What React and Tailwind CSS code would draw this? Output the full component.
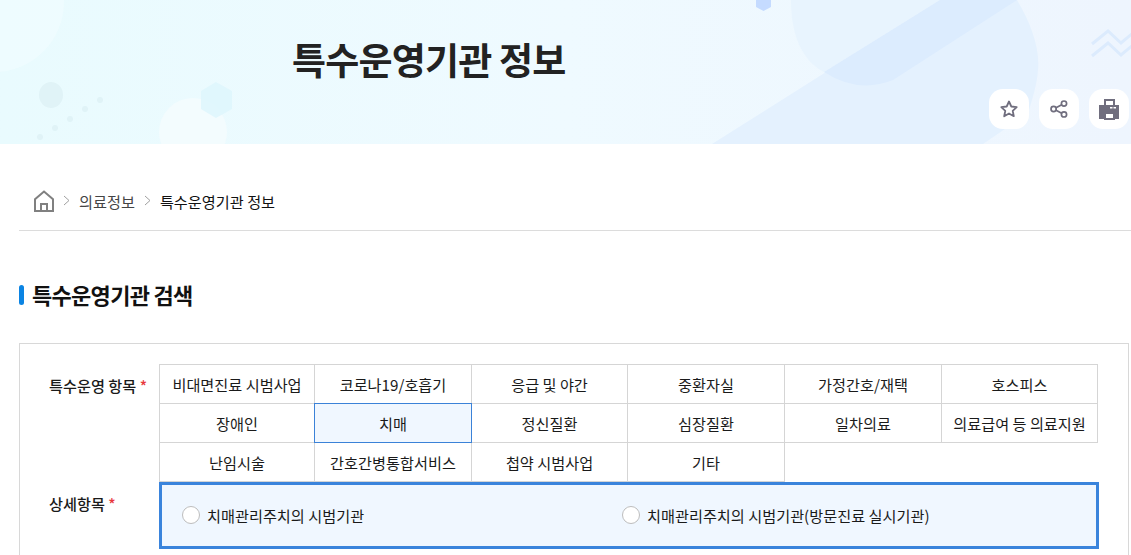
import React from "react";

const FONT = "font-['Noto_Sans_CJK_KR','Noto_Sans',sans-serif]";

const cells = [
  "비대면진료 시범사업", "코로나19/호흡기", "응급 및 야간", "중환자실", "가정간호/재택", "호스피스",
  "장애인", "치매", "정신질환", "심장질환", "일차의료", "의료급여 등 의료지원",
  "난임시술", "간호간병통합서비스", "첩약 시범사업", "기타",
];

function Decor() {
  return (
    <svg className="absolute inset-0 h-full w-full" viewBox="0 0 1131 144" preserveAspectRatio="none" aria-hidden="true">
      <circle cx="-6" cy="2" r="70" fill="#f3fdff" opacity="0.55" />
      <ellipse cx="51" cy="95" rx="12" ry="13" fill="#e0f3f7" />
      <circle cx="100" cy="100" r="3" fill="#e0f3f7" />
      <circle cx="85" cy="109" r="3" fill="#e0f3f7" />
      <circle cx="70" cy="119" r="3" fill="#e0f3f7" />
      <circle cx="55" cy="128" r="3" fill="#e0f3f7" />
      <circle cx="40" cy="137" r="3" fill="#e0f3f7" />
      <circle cx="193" cy="132" r="34" fill="#f3fcfe" />
      <polygon points="216,82 232,91 232,109 216,118 201,109 201,91" fill="#dff6fd" opacity="0.9" />
      <polygon points="756,0 771,0 771,7 763.5,11 756,7" fill="#c5dbff" />
      <path d="M712,144 L940,0 L1017,0 C1032,25 1040,50 1038,70 C1037,85 1032,100 1028,113 L983,144 Z" fill="#e4f1fe" />
      <path d="M791,0 C791,40 805,62 824,72 L940,0 Z" fill="#e8f4fe" />
      <path d="M824,72 L940,0 L1017,0 L893,80 Q858,94 824,72 Z" fill="#dcecfe" />
      <path d="M1092,44 L1108,31 L1121,43 L1133,33 M1092,56 L1108,43 L1121,55 L1133,45" fill="none" stroke="#dcebfd" strokeWidth="3" />
    </svg>
  );
}

function Printer() {
  return (
    <svg width="20" height="21" viewBox="0 0 20 21" aria-hidden="true">
      <path d="M5 0h11v7h-2V2H7v5H5z" fill="#706e7e" />
      <path d="M0 6h20v14h-4v-7H5v7H0z" fill="#706e7e" />
      <path d="M5 13h11v8H5zM7 15v4h7v-4z" fill="#706e7e" fillRule="evenodd" />
      <rect x="11" y="8" width="2.5" height="1.5" fill="#fff" />
      <rect x="14.5" y="8" width="2.5" height="1.5" fill="#fff" />
    </svg>
  );
}

function Star() {
  return (
    <svg width="19" height="18" viewBox="0 0 19 18" fill="none" stroke="#706e7e" strokeWidth="1.8" strokeLinejoin="round" aria-hidden="true">
      <path d="M9 1.5l2.3 5 5.4.6-4 3.7 1.1 5.4-4.8-2.7-4.8 2.7 1.1-5.4-4-3.7 5.4-.6z" />
    </svg>
  );
}

function Share() {
  return (
    <svg width="18" height="18" viewBox="0 0 18 18" fill="none" stroke="#706e7e" strokeWidth="1.7" aria-hidden="true">
      <circle cx="3.6" cy="9" r="2.6" />
      <circle cx="14" cy="3.6" r="2.6" />
      <circle cx="14" cy="14.4" r="2.6" />
      <path d="M6 7.8l5.7-3M6 10.2l5.7 3" />
    </svg>
  );
}

function Home() {
  return (
    <svg width="22" height="22" viewBox="0 0 22 22" fill="none" stroke="#808080" strokeWidth="2" aria-hidden="true">
      <path d="M2 21V9.2L11 1.5l9 7.7V21z" />
      <path d="M8 21v-7h6v7" />
    </svg>
  );
}

function Chevron() {
  return (
    <svg width="7" height="11" viewBox="0 0 7 11" fill="none" stroke="#a0a0a0" strokeWidth="1" aria-hidden="true">
      <path d="M1 1l5 4.5L1 10" />
    </svg>
  );
}

function Radio({ label, className }) {
  return (
    <label className={`flex items-center gap-[7px] ${className}`}>
      <span className="h-[18px] w-[18px] rounded-full border border-[#bdbdbd] bg-white" />
      <span>{label}</span>
    </label>
  );
}

export default function App() {
  return (
    <div className={`h-[555px] overflow-hidden bg-white text-[15.2px] text-[#1a1a1a] ${FONT}`}>
      <header className="relative h-[144px] overflow-hidden bg-gradient-to-r from-[#e9fbfe] via-[#effaff] to-[#eef5fe]">
        <Decor />
        <h1 className="relative pl-[292px] pt-[30px] text-[37px] leading-[58px] font-bold tracking-[-0.8px] text-[#222]">특수운영기관 정보</h1>
        <div className="absolute bottom-[15px] right-[2px] flex gap-[10px]">
          <button className="flex h-[40px] w-[40px] items-center justify-center rounded-[14px] bg-white"><Star /></button>
          <button className="flex h-[40px] w-[40px] items-center justify-center rounded-[14px] bg-white"><Share /></button>
          <button className="flex h-[40px] w-[40px] items-center justify-center rounded-[14px] bg-white"><Printer /></button>
        </div>
      </header>

      <nav className="ml-[19px] flex h-[87px] items-center border-b border-[#dcdcdc] pl-[14px] pt-[27px] leading-[22px]">
        <Home />
        <span className="ml-[8px]"><Chevron /></span>
        <span className="ml-[9px] text-[#444]">의료정보</span>
        <span className="ml-[9px]"><Chevron /></span>
        <span className="ml-[9px] text-[#111]">특수운영기관 정보</span>
      </nav>

      <h2 className="ml-[19px] mt-[49px] flex h-[30px] items-center gap-[8px] text-[22px] font-bold tracking-[-0.7px] text-[#111]">
        <span className="h-[20px] w-[5px] rounded-full bg-[#0b84e3]" />
        <span className="-mt-[2px]">특수운영기관 검색</span>
      </h2>

      <section className="ml-[19px] mt-[33px] mr-[2px] border border-[#d8d8d8] px-[29px] pt-[20px] pb-[40px]">
        <div className="flex">
          <div className="w-[110px] shrink-0 pt-[8px] font-medium leading-[26px]">
            특수운영 항목 <span className="text-[#e8383d]">*</span>
          </div>
          <div className="grid w-[939px] grid-cols-[155px_157px_156px_157px_157px_156px] pl-px pt-px">
            {cells.map((c) => (
              <div
                key={c}
                className={
                  c === "치매"
                    ? "relative z-10 -ml-px -mt-px flex h-[40px] items-center justify-center border border-[#3b82d8] bg-[#f0f7ff]"
                    : "-ml-px -mt-px flex h-[40px] items-center justify-center border border-[#d5d5d5]"
                }
              >
                {c}
              </div>
            ))}
          </div>
        </div>
        <div className="flex">
          <div className="w-[110px] shrink-0 pt-[8px] font-medium leading-[26px]">
            상세항목 <span className="text-[#e8383d]">*</span>
          </div>
          <div className="flex h-[67px] w-[940px] items-center border-[3px] border-[#3a84dc] bg-[#f0f7ff] pl-[20px]">
            <Radio label="치매관리주치의 시범기관" className="w-[440px]" />
            <Radio label="치매관리주치의 시범기관(방문진료 실시기관)" />
          </div>
        </div>
      </section>
    </div>
  );
}
